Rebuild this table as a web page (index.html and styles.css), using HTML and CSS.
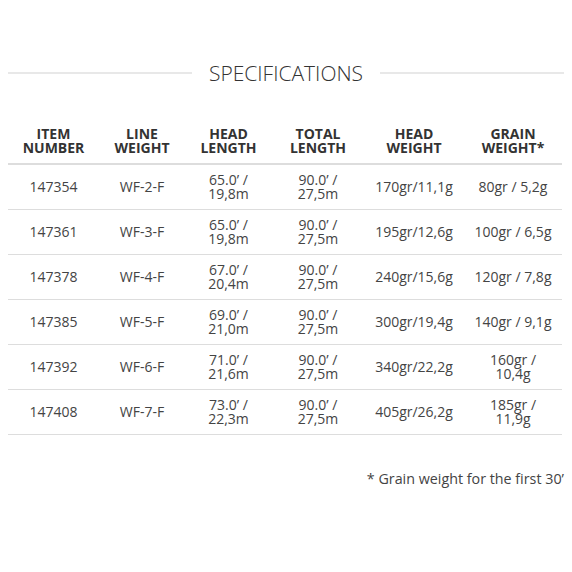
FILE: index.html
```html
<!DOCTYPE html>
<html lang="en">
<head>
<meta charset="utf-8">
<title>Specifications</title>
<link rel="stylesheet" href="styles.css">
</head>
<body>
<div class="page">
  <div class="title-row">
    <span class="rule"></span>
    <h2 class="title">SPECIFICATIONS</h2>
    <span class="rule"></span>
  </div>
  <table class="specs">
    <colgroup>
      <col class="c1"><col class="c2"><col class="c3"><col class="c4"><col class="c5"><col class="c6">
    </colgroup>
    <thead>
      <tr>
        <th>ITEM<br>NUMBER</th>
        <th>LINE<br>WEIGHT</th>
        <th>HEAD<br>LENGTH</th>
        <th>TOTAL<br>LENGTH</th>
        <th>HEAD<br>WEIGHT</th>
        <th>GRAIN<br>WEIGHT*</th>
      </tr>
    </thead>
    <tbody>
      <tr><td>147354</td><td>WF-2-F</td><td>65.0’ /<br>19,8m</td><td>90.0’ /<br>27,5m</td><td>170gr/11,1g</td><td>80gr / 5,2g</td></tr>
      <tr><td>147361</td><td>WF-3-F</td><td>65.0’ /<br>19,8m</td><td>90.0’ /<br>27,5m</td><td>195gr/12,6g</td><td>100gr / 6,5g</td></tr>
      <tr><td>147378</td><td>WF-4-F</td><td>67.0’ /<br>20,4m</td><td>90.0’ /<br>27,5m</td><td>240gr/15,6g</td><td>120gr / 7,8g</td></tr>
      <tr><td>147385</td><td>WF-5-F</td><td>69.0’ /<br>21,0m</td><td>90.0’ /<br>27,5m</td><td>300gr/19,4g</td><td>140gr / 9,1g</td></tr>
      <tr><td>147392</td><td>WF-6-F</td><td>71.0’ /<br>21,6m</td><td>90.0’ /<br>27,5m</td><td>340gr/22,2g</td><td>160gr /<br>10,4g</td></tr>
      <tr><td>147408</td><td>WF-7-F</td><td>73.0’ /<br>22,3m</td><td>90.0’ /<br>27,5m</td><td>405gr/26,2g</td><td>185gr /<br>11,9g</td></tr>
    </tbody>
  </table>
  <p class="note">* Grain weight for the first 30’</p>
</div>
</body>
</html>
```

FILE: styles.css
```css
html, body {
  margin: 0;
  padding: 0;
  background: #fff;
}

.page {
  padding: 61px 8px 0 8px;
  font-family: "Open Sans", "Liberation Sans", sans-serif;
  color: #444;
}

.title-row {
  display: flex;
  align-items: center;
}

.rule {
  flex: 1;
  height: 2px;
  background: #e8e8e8;
}

.title {
  margin: 0;
  padding: 0 17px;
  font-size: 21px;
  font-weight: 300;
  line-height: 24px;
  color: #333;
}

.specs {
  margin-top: 34px;
  width: 554px;
  table-layout: fixed;
  border-collapse: collapse;
}

.c1 { width: 91px; }
.c2 { width: 86px; }
.c3 { width: 87px; }
.c4 { width: 92px; }
.c5 { width: 100px; }
.c6 { width: 98px; }

.specs th {
  font-size: 14px;
  font-weight: 700;
  line-height: 14px;
  color: #333;
  text-align: center;
  vertical-align: bottom;
  padding: 8px 0;
  border-bottom: 2px solid #ddd;
}

.specs td {
  font-size: 14px;
  line-height: 14px;
  text-align: center;
  vertical-align: middle;
  padding: 8px 0;
  height: 28px;
  border-bottom: 1px solid #ddd;
  color: #444;
}

.note {
  margin: 34px 0 0 0;
  text-align: right;
  font-size: 14.3px;
  line-height: 20px;
  color: #444;
}
```
